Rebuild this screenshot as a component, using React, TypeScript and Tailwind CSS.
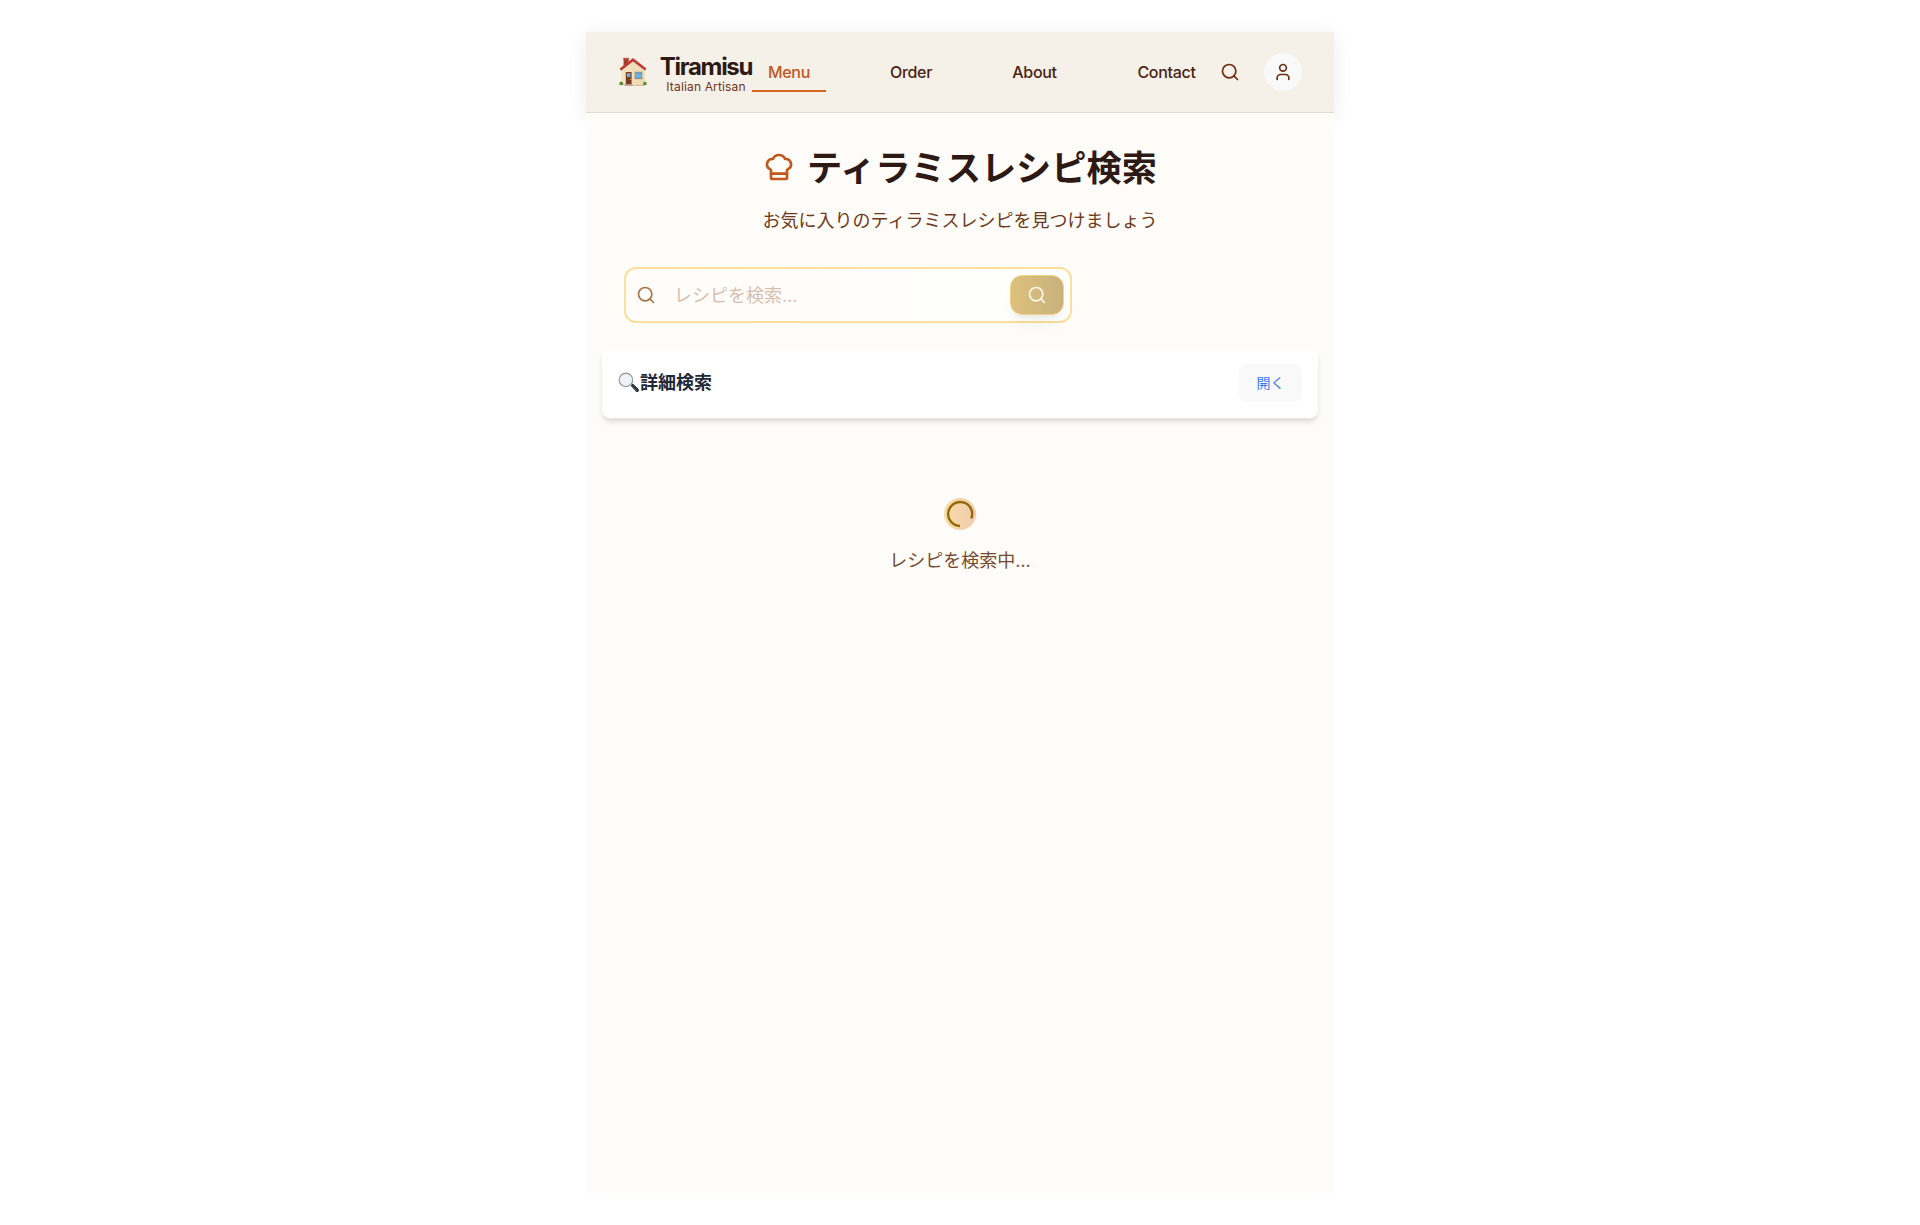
import React from 'react';
import { ChefHat, Search, User } from 'lucide-react';

function House() {
  return (
    <svg viewBox="0 0 28 30" className="h-[30px] w-7 shrink-0">
      <defs>
        <linearGradient id="wall" x1="0" x2="1">
          <stop offset="0" stopColor="#f5e4c2" />
          <stop offset="1" stopColor="#ecd6b0" />
        </linearGradient>
      </defs>
      <path d="M2.4 12.4 14 3.6 25.6 12.4v15.8H2.4z" fill="url(#wall)" />
      <path d="M4.6 1.2h5v5L4.6 10z" fill="#a5382f" />
      <path d="M4.2 0.8h5.8v1.5H4.2z" fill="#c4564a" />
      <path d="M14 1 27.4 11.4 26.2 13.2 14 4 2 13.4 0.6 11.6z" fill="#c73a32" />
      <path d="M14 4 26.2 13.2M14 4 2 13.4" stroke="#7c2a26" strokeWidth=".6" />
      <path d="M6.8 15h5.8v12.4H6.8z" fill="#7b3b22" />
      <path d="M8 16.2h3.4v3.8H8z" fill="#67b3e0" />
      <circle cx="11.6" cy="22.5" r=".6" fill="#e8c46c" />
      <path d="M15.6 14.8h7.6v7.4h-7.6z" fill="#a08d78" />
      <path d="M16.4 15.6h6v5.6h-6z" fill="#5fa9de" />
      <path d="M16.4 18.6h6" stroke="#8cc8ee" strokeWidth=".8" />
      <path d="M5.6 27.2h8v1.6h-8z" fill="#a99c8e" />
      <path d="M13.6 28H25v.8H13.6z" fill="#c9b491" />
      <path d="M0 27.2q.2-2.6 2.2-2.6t2.2 3.2q-2.2 1.2-4.4-.6M24 28q.3-3.4 2-3.4t2 3q-2 1.2-4 .4" fill="#5f8f35" />
    </svg>
  );
}

function Magnifier() {
  return (
    <svg viewBox="0 0 22 22" className="h-[22px] w-[22px] shrink-0">
      <path d="m12.6 13.4 2.1-1.8 5.6 5.2q1.3 1.3.2 2.6-1.3 1.3-2.7.1z" fill="#292c30" />
      <path d="m13.4 13.8 5.6 5.1" stroke="#6b6f74" strokeWidth=".8" />
      <circle cx="7.9" cy="7.9" r="6.8" fill="#f1f4f6" stroke="#87939c" strokeWidth="1.1" />
      <circle cx="7.9" cy="7.9" r="5.8" fill="none" stroke="#d5dde2" strokeWidth=".6" />
    </svg>
  );
}

function Header() {
  return (
    <header className="flex h-[81px] items-center border-b border-[#e6dcd1] bg-[#f5f0e8] pr-8 pb-px pl-[33px] font-[Inter,sans-serif] shadow-[0_4px_20px_rgba(61,28,10,0.08)]">
      <House />
      <div className="ml-[13px] flex w-[92px] shrink-0 flex-col items-center pt-[3px]">
        <span className="text-[24px] leading-7 font-bold tracking-[-1.3px] whitespace-nowrap text-[#2e1a14]">Tiramisu</span>
        <span className="text-[12px] leading-3 font-normal tracking-[0.15px] whitespace-nowrap text-[#6f3518]">Italian Artisan</span>
      </div>
      <nav className="flex h-10 shrink-0 items-center text-base font-medium tracking-[-0.3px] text-[#4a2312]">
        <a className="flex h-10 w-[74px] items-center justify-center border-b-2 border-[#d4661f] pt-0.5 text-[#c0571c]">Menu</a>
        <a className="ml-12 flex w-[74px] justify-center">Order</a>
        <a className="ml-12 flex w-[77px] justify-center">About</a>
        <a className="ml-12 flex w-[91px] justify-center">Contact</a>
      </nav>
      <Search className="ml-auto h-5 w-5 shrink-0 text-[#6b2f14]" strokeWidth={2} />
      <button className="ml-6 flex h-[38px] w-[38px] shrink-0 items-center justify-center rounded-full bg-[#f9f9f9] text-[#6b2f14]">
        <User className="h-5 w-5" strokeWidth={2} />
      </button>
    </header>
  );
}

export default function App() {
  return (
    <div className="min-h-[1225px] bg-white py-8 font-[Inter,'Noto_Sans_CJK_JP',sans-serif]">
      <div className="mx-auto h-[1161px] w-[748px] bg-[#fefcf8]">
        <Header />
        <main className="relative bg-[#fefcf8] px-4 pt-[34px]">
          <div className="flex h-10 items-center justify-center gap-3">
            <ChefHat className="h-8 w-8 text-[#c0571c]" strokeWidth={2} />
            <h1 className="pt-px text-[35.2px] leading-10 font-bold text-[#2e1a14]">ティラミスレシピ検索</h1>
          </div>
          <p className="mt-5 text-center text-[18px] leading-7 text-[#6b3a20]">お気に入りのティラミスレシピを見つけましょう</p>

          <div className="mt-8 ml-[22px] flex h-14 w-[448px] items-center rounded-xl border-2 border-[#fbdf9b] bg-gradient-to-r from-[#fefcf8] to-white pr-[6px] pl-[10px]">
            <Search className="h-5 w-5 text-[#a8754a]" strokeWidth={2} />
            <input className="ml-[18px] min-w-0 flex-1 bg-transparent text-[18px] placeholder:text-[#d6bfae]" placeholder="レシピを検索..." />
            <button className="flex h-10 w-[54px] items-center justify-center rounded-xl border border-[#f0d28b] bg-gradient-to-r from-[#dcc07d] to-[#c9b27c] text-[#fdf8ea] shadow-[0_10px_15px_-3px_rgba(0,0,0,0.06),0_4px_6px_-4px_rgba(0,0,0,0.08)]">
              <Search className="h-5 w-5" strokeWidth={2} />
            </button>
          </div>

          <section className="mt-[24.5px] flex h-[71px] items-center justify-between rounded-lg border-b border-gray-200 bg-white px-4 shadow-md">
            <h2 className="flex items-center text-[18px] leading-7 font-bold text-[#1f2937]">
              <Magnifier />
              <span>詳細検索</span>
            </h2>
            <button className="h-[38px] w-[63px] rounded-lg bg-[#f9f9f9] pb-px text-[14px] text-[#3b7cf5]">開く</button>
          </section>

          <div className="mt-[79.5px] flex flex-col items-center">
            <div className="flex h-8 w-8 items-center justify-center rounded-full bg-gradient-to-r from-[#f7dca6] to-[#f1cbae]">
              <svg viewBox="0 0 32 32" className="h-8 w-8">
                <path d="M16 28A12 12 0 1 1 27.3 20.5" fill="none" stroke="#936b06" strokeWidth="2.4" />
              </svg>
            </div>
            <p className="mt-[17px] text-[18px] leading-7 text-[#744a32]">レシピを検索中...</p>
          </div>
        </main>
      </div>
    </div>
  );
}
